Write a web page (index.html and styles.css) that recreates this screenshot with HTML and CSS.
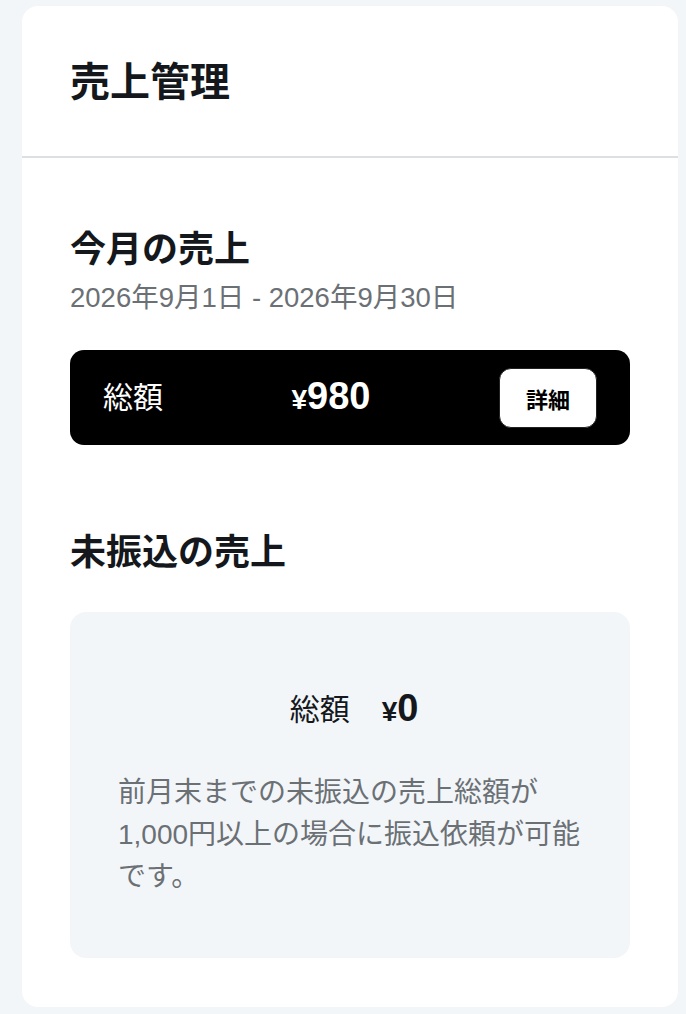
FILE: index.html
```html
<!DOCTYPE html>
<html lang="ja">
<head>
	<meta charset="utf-8">
	<title>売上管理</title>
	<link rel="stylesheet" href="styles.css">
</head>
<body>
	<div class="sales-card">
		<div class="sales-header">
			<h1 class="sales-title">売上管理</h1>
		</div>
		<div class="sales-body">
			<h2 class="section-title">今月の売上</h2>
			<p class="period">2026年9月1日 - 2026年9月30日</p>
			<div class="total-bar">
				<span class="total-label">総額</span>
				<span class="amount"><span class="yen">¥</span>980</span>
				<button class="detail-btn" type="button">詳細</button>
			</div>

			<h2 class="section-title unpaid-title">未振込の売上</h2>
			<div class="unpaid-box">
				<div class="unpaid-total">
					<span class="total-label">総額</span>
					<span class="amount"><span class="yen">¥</span>0</span>
				</div>
				<p class="unpaid-note">前月末までの未振込の売上総額が1,000円以上の場合に振込依頼が可能です。</p>
			</div>
		</div>
	</div>
</body>
</html>
```

FILE: styles.css
```css
body {
	margin: 0;
	background: #f3f6f9;
	font-family: "Liberation Sans", "Noto Sans CJK JP", sans-serif;
	color: #14181c;
}

.sales-card {
	margin: 6px 8px 8px 22px;
	background: #ffffff;
	border-radius: 16px;
	overflow: hidden;
}

.sales-header {
	height: 150px;
	padding: 0 48px;
	display: flex;
	align-items: center;
	border-bottom: 2px solid #dde0e3;
}

.sales-title {
	margin: 0;
	font-size: 40px;
	line-height: 48px;
	font-weight: bold;
	padding-top: 2px;
}

.sales-body {
	padding: 68px 48px 49px;
}

.section-title {
	margin: 0;
	font-size: 36px;
	line-height: 48px;
	font-weight: bold;
}

.period {
	margin: 6px 0 0;
	font-size: 27.5px;
	line-height: 36px;
	color: #6b7075;
}

.total-bar {
	margin-top: 34px;
	height: 95px;
	padding: 0 33px;
	background: #000000;
	border-radius: 14px;
	display: flex;
	align-items: center;
	justify-content: space-between;
	color: #ffffff;
}

.total-label {
	font-size: 30px;
	line-height: 48px;
}

.amount {
	font-size: 38px;
	line-height: 48px;
	font-weight: bold;
}

.yen {
	font-size: 28px;
}

.detail-btn {
	width: 98px;
	height: 60px;
	border: 1px solid #222;
	border-radius: 12px;
	background: #ffffff;
	color: #000000;
	font-family: inherit;
	font-size: 22px;
	font-weight: bold;
}

.unpaid-title {
	margin-top: 84px;
}

.unpaid-box {
	margin-top: 35px;
	padding: 72px 40px 60px 48px;
	background: #f3f6f9;
	border-radius: 16px;
}

.unpaid-total {
	display: flex;
	justify-content: center;
	align-items: center;
	gap: 32px;
	color: #14181c;
}

.unpaid-note {
	margin: 36px 0 0;
	font-size: 28px;
	line-height: 42px;
	color: #6b7075;
}
```
